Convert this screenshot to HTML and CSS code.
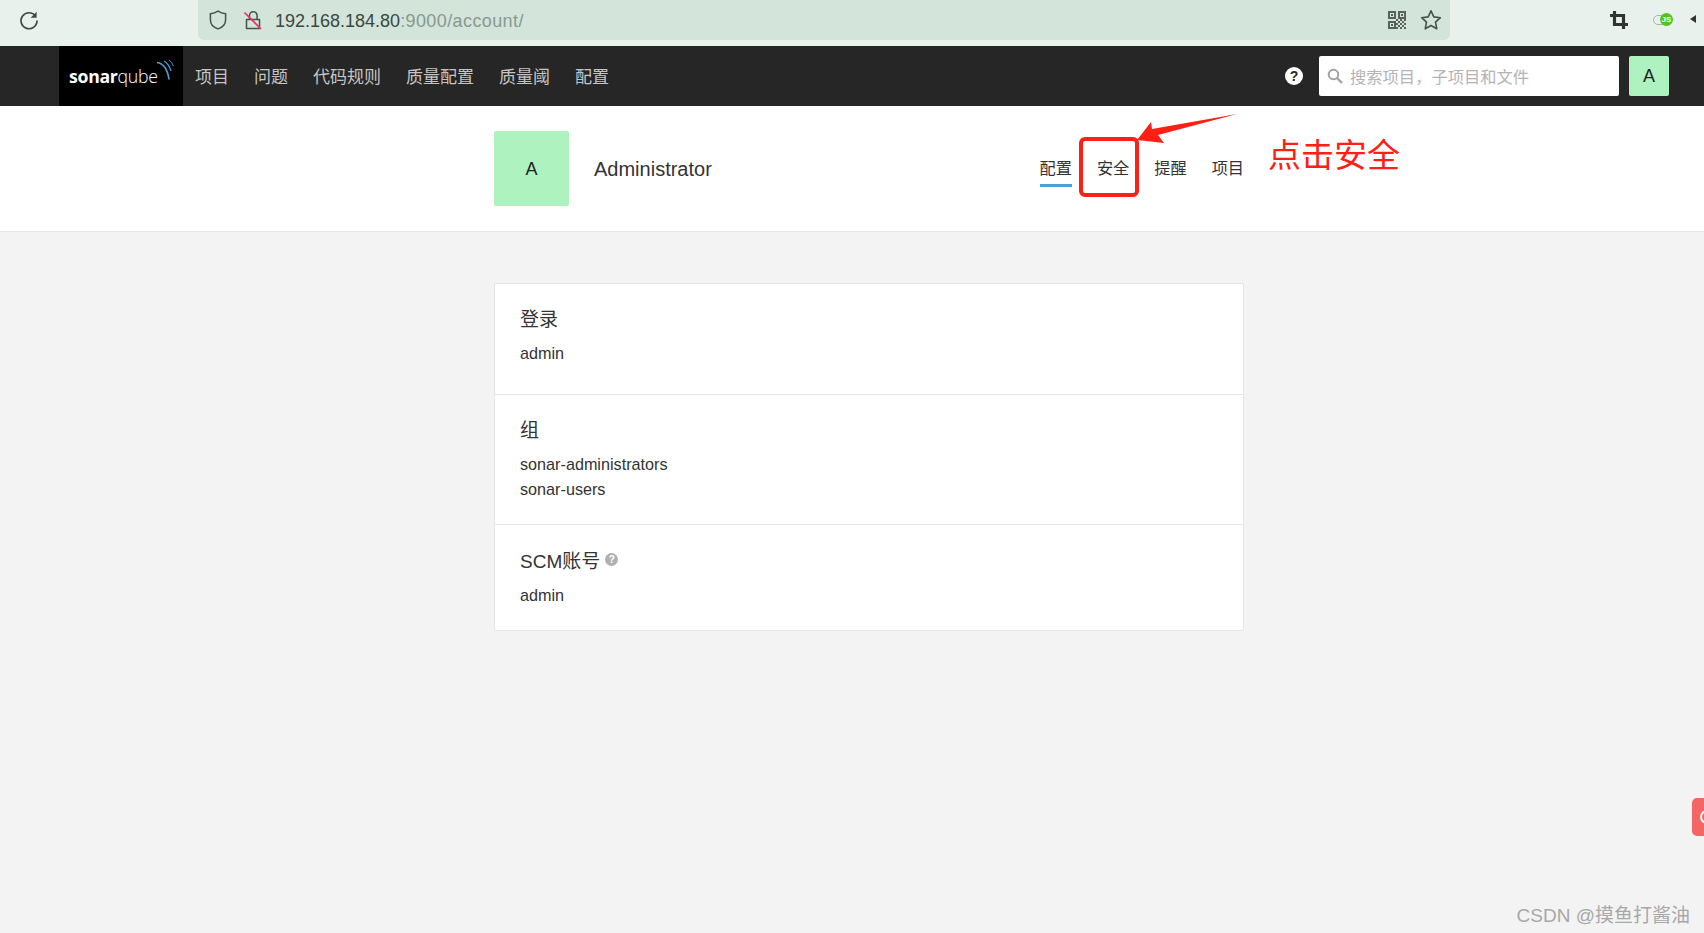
FILE: index.html
```html
<!DOCTYPE html>
<html lang="zh-CN">
<head>
  <meta charset="UTF-8" />
  <meta name="viewport" content="width=device-width, initial-scale=1.0" />
  <title>Administrator - SonarQube</title>
  <link rel="stylesheet" href="styles.css">
</head>
<body>
  <div class="browser-bar">
    <svg class="reload" width="22" height="22" viewBox="0 0 22 22" fill="none">
      <path d="M17.6 7.2A8 8 0 1 0 19 11.5" stroke="#3f4a45" stroke-width="1.7"/>
      <path d="M18.6 2.8v6h-6z" fill="#3f4a45"/>
    </svg>
    <div class="address">
      <svg width="20" height="22" viewBox="0 0 20 22" fill="none">
        <path d="M10 2.2c2.4 1.6 4.8 2.3 7.6 2.5v6c0 4.5-3 7.6-7.6 9.2-4.600-1.600-7.600-4.700-7.600-9.200v-6C5.200 4.500 7.600 3.800 10 2.200z" stroke="#46524c" stroke-width="1.5"/>
      </svg>
      <svg class="lock" width="20" height="22" viewBox="0 0 20 22" fill="none">
        <path d="M6.500 10V6.500a3.800 3.800 0 0 1 7.600 0V10M3.500 10.500h13v9h-13z" stroke="#46524c" stroke-width="1.500" stroke-linejoin="round"/>
        <path d="M1.500 3.500l16.500 16.500" stroke="#f0325a" stroke-width="1.700"/>
      </svg>
      <span class="url">192.168.184.80<span class="url-rest">:9000/account/</span></span>
      <svg class="qr" width="18" height="18" viewBox="0 0 18 18" fill="#58635d">
        <path d="M0 0h8v8H0zm2 2v4h4V2zM10 0h8v8h-8zm2 2v4h4V2zM0 10h8v8H0zm2 2v4h4v-4z" fill-rule="evenodd"/>
        <path d="M3 3h2v2H3zM13 3h2v2h-2zM3 13h2v2H3zM8 8h2v2H8zM10 10h2v2h-2zM12 8h2v2h-2zM12 12h2v2h-2zM14 10h2v2h-2zM16 8h2v2h-2zM16 12h2v2h-2zM10 14h2v2h-2zM14 14h2v2h-2zM12 16h2v2h-2zM16 16h2v2h-2zM8 12h2v2H8zM8 16h2v2H8z"/>
      </svg>
      <svg class="star" width="22" height="22" viewBox="0 0 22 22" fill="none">
        <path d="M11 1.800l2.800 6.100 6.600.8-4.900 4.500 1.300 6.600L11 16.500l-5.800 3.300 1.300-6.600-4.900-4.500 6.600-.8z" stroke="#46524c" stroke-width="1.600" stroke-linejoin="round"/>
      </svg>
    </div>
    <svg class="crop" width="18" height="18" viewBox="0 0 18 18" fill="none">
      <path d="M4.500 0v13.500H18M0 4.500h13.500V18" stroke="#2f3532" stroke-width="3.200"/>
    </svg>
    <div class="ext">
      <span class="ext-toggle"></span>
      <span class="ext-js">JS</span>
    </div>
    <svg class="ext-more" width="6" height="12" viewBox="0 0 6 12"><path d="M6 2 0 6l6 4z" fill="#2f3532"/></svg>
  </div>

  <nav class="navbar">
    <a class="logo">
      <span class="logo-text"><b>sonar</b>qube</span>
      <svg class="logo-arcs" width="18" height="26" viewBox="0 0 18 26" fill="none">
        <path d="M1 3.500c6 .8 10.500 6 12 17" stroke="#4b9fd5" stroke-width="1.700"/>
        <path d="M8 2c3.500 2.200 5.800 5.500 7 10" stroke="#4b9fd5" stroke-width="1.200"/>
        <path d="M13 1c2 1.600 3.400 3.500 4.300 6" stroke="#4b9fd5" stroke-width="1"/>
      </svg>
    </a>
    <ul class="nav-links">
      <li>项目</li>
      <li>问题</li>
      <li>代码规则</li>
      <li>质量配置</li>
      <li>质量阈</li>
      <li>配置</li>
    </ul>
    <svg class="help" width="18" height="18" viewBox="0 0 18 18">
      <circle cx="9" cy="9" r="9" fill="#fff"/>
      <text x="9" y="14" class="help-mark">?</text>
    </svg>
    <div class="search">
      <svg width="16" height="16" viewBox="0 0 16 16" fill="none">
        <circle cx="6.500" cy="6.500" r="4.800" stroke="#a3a3a3" stroke-width="2"/>
        <path d="M10 10l5 5" stroke="#a3a3a3" stroke-width="2.400"/>
      </svg>
      <span>搜索项目，子项目和文件</span>
    </div>
    <div class="nav-avatar">A</div>
  </nav>

  <header class="account-header">
    <div class="account-inner">
      <div class="big-avatar">A</div>
      <h1>Administrator</h1>
      <ul class="tabs">
        <li class="active">配置</li>
        <li>安全</li>
        <li>提醒</li>
        <li>项目</li>
      </ul>
    </div>
  </header>

  <main class="content">
    <div class="card">
      <section>
        <h2>登录</h2>
        <p>admin</p>
      </section>
      <section>
        <h2>组</h2>
        <p>sonar-administrators</p>
        <p>sonar-users</p>
      </section>
      <section>
        <h2>SCM账号 <span class="info">?</span></h2>
        <p>admin</p>
      </section>
    </div>
  </main>

  <!-- red marks drawn over the screenshot -->
  <div class="mark-box"></div>
  <svg class="mark-arrow" width="108" height="36" viewBox="0 0 108 36">
    <path d="M0 26 14 8 15 15 100 0 21 21 27 29z" fill="#ff2015"/>
  </svg>
  <div class="mark-text">点击安全</div>

  <div class="side-tab"><span></span></div>
  <div class="watermark">CSDN @摸鱼打酱油</div>
</body>
</html>
```

FILE: styles.css
```css
* {
  box-sizing: border-box;
}

html,
body {
  height: 100%;
}

body {
  margin: 0;
  position: relative;
  overflow: hidden;
  background-color: #f3f3f3;
  color: #333;
  font-family: "Liberation Sans", "Noto Sans CJK SC", sans-serif;
  font-size: 16px;
}

ul {
  list-style: none;
  margin: 0;
  padding: 0;
}

/* browser toolbar */
.browser-bar {
  display: flex;
  align-items: flex-start;
  height: 46px;
  padding-left: 18px;
  background-color: #e8f1ec;
}

.reload {
  margin-top: 9px;
}

.address {
  display: flex;
  align-items: center;
  width: 1252px;
  height: 40px;
  margin-left: 158px;
  padding: 0 8px 0 10px;
  background-color: #d3e4da;
  border-radius: 0 0 6px 6px;
}

.lock {
  margin-left: 15px;
}

.url {
  margin: 2px 0 0 12px;
  font-size: 18px;
  color: #3b4741;
}

.url-rest {
  color: #88998f;
  letter-spacing: 0.400px;
}

.qr {
  margin-left: auto;
}

.star {
  margin-left: 14px;
}

.crop {
  margin: 11px 0 0 160px;
}

.ext {
  position: relative;
  width: 20px;
  height: 14px;
  margin: 13px 0 0 25px;
}

.ext-toggle {
  position: absolute;
  left: 0;
  top: 2px;
  width: 16px;
  height: 10px;
  background-color: #e8f1ec;
  border: 1px solid #a9b3ae;
  border-radius: 5px;
}

.ext-js {
  position: absolute;
  right: 0;
  top: 0;
  width: 13px;
  height: 13px;
  background-color: #52c41a;
  border-radius: 50%;
  color: #fff;
  font-size: 8px;
  font-weight: bold;
  line-height: 13px;
  text-align: center;
}

.ext-more {
  margin: 13px 0 0 17px;
}

/* sonarqube navbar */
.navbar {
  display: flex;
  align-items: center;
  height: 60px;
  padding: 0 35px 0 59px;
  background-color: #262626;
}

.logo {
  display: flex;
  align-items: center;
  width: 124px;
  height: 60px;
  padding-left: 10px;
  background-color: #000;
}

.logo-text {
  color: #fff;
  font-family: "Open Sans", sans-serif;
  font-size: 17.700px;
  font-weight: 300;
  letter-spacing: -0.300px;
}

.logo-text b {
  font-weight: 700;
}

.logo-arcs {
  margin: -9px 0 0 -2px;
}

.nav-links {
  display: flex;
  gap: 25px;
  margin: -1px 0 0 12px;
  color: #c5c5c5;
}

.nav-links li {
  font-size: 17px;
}

.help {
  margin-left: auto;
}

.help-mark {
  fill: #262626;
  font-family: "Liberation Sans", sans-serif;
  font-size: 14px;
  font-weight: bold;
  text-anchor: middle;
}

.search {
  display: flex;
  align-items: center;
  gap: 7px;
  width: 300px;
  height: 40px;
  margin-left: 16px;
  padding-left: 8px;
  background-color: #fff;
  border-radius: 2px;
  color: #b4b4b4;
  font-size: 16.300px;
}

.nav-avatar {
  width: 40px;
  height: 40px;
  margin-left: 10px;
  background-color: #aef2c0;
  border-radius: 2px;
  color: #222;
  font-size: 18px;
  line-height: 40px;
  text-align: center;
}

/* account header */
.account-header {
  height: 126px;
  background-color: #fff;
  border-bottom: 1px solid #e6e6e6;
}

.account-inner {
  display: flex;
  align-items: center;
  width: 750px;
  height: 125px;
  margin-left: 494px;
}

.big-avatar {
  width: 75px;
  height: 75px;
  padding-top: 1px;
  background-color: #aef2c0;
  border-radius: 2px;
  color: #222;
  font-size: 18px;
  line-height: 75px;
  text-align: center;
}

.account-inner h1 {
  margin: 2px 0 0 25px;
  font-size: 20px;
  font-weight: normal;
}

.tabs {
  display: flex;
  gap: 25px;
  margin-left: auto;
}

.tabs li {
  height: 36px;
  padding-top: 7px;
  font-size: 16.200px;
  line-height: 20px;
}

.tabs .active {
  border-bottom: 3px solid #4b9fd5;
}

/* details card */
.content {
  padding: 51px 0 0 494px;
}

.card {
  width: 750px;
  background-color: #fff;
  border: 1px solid #e6e6e6;
  border-radius: 2px;
}

.card section {
  padding: 19px 25px 22px;
  border-top: 1px solid #e6e6e6;
}

.card section:first-child {
  padding-bottom: 28px;
  border-top: none;
}

.card section:last-child {
  padding-top: 20px;
  padding-bottom: 22px;
}

.card section:last-child p {
  margin-top: 1px;
}

.card h2 {
  display: flex;
  align-items: center;
  gap: 5px;
  height: 28px;
  margin: 0 0 10px;
  font-size: 19px;
  font-weight: normal;
}

.card p {
  margin: 0;
  font-size: 16.200px;
  line-height: 25px;
}

.info {
  width: 13px;
  height: 13px;
  background-color: #b0b0b0;
  border-radius: 50%;
  color: #fff;
  font-size: 10px;
  font-weight: bold;
  line-height: 13px;
  text-align: center;
}

/* annotations */
.mark-box {
  position: absolute;
  left: 1079px;
  top: 137px;
  width: 60px;
  height: 60px;
  border: 4px solid #ff2015;
  border-radius: 6px;
}

.mark-arrow {
  position: absolute;
  left: 1137px;
  top: 114px;
}

.mark-text {
  position: absolute;
  left: 1268px;
  top: 134px;
  color: #ff2015;
  font-size: 33px;
  line-height: 44px;
}

.side-tab {
  position: absolute;
  right: 0;
  top: 798px;
  width: 12px;
  height: 38px;
  overflow: hidden;
  background-color: #f46666;
  border-radius: 5px 0 0 5px;
}

.side-tab span {
  display: block;
  width: 14px;
  height: 14px;
  margin: 12px 0 0 8px;
  border: 2px solid #fff;
  border-radius: 50%;
}

.watermark {
  position: absolute;
  right: 14px;
  top: 903px;
  color: #a8a8a8;
  font-size: 19px;
  line-height: 26px;
}
```
